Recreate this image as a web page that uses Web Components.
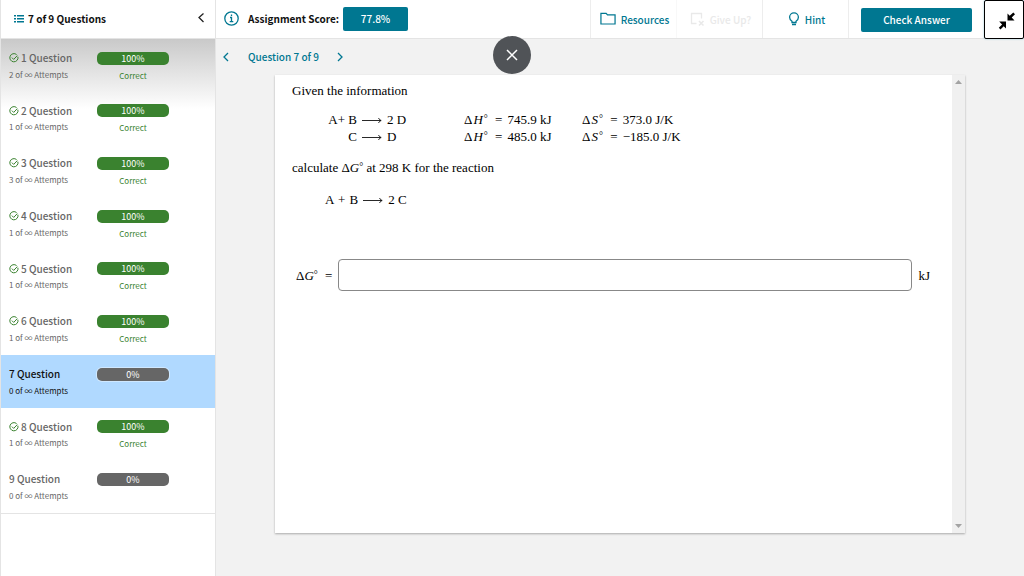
<!DOCTYPE html>
<html lang="en">
<head>
<meta charset="utf-8">
<meta name="viewport" content="width=device-width, initial-scale=1">
<title>Assignment</title>
<style>
  html, body {
    height: 100%;
    margin: 0;
  }
  body {
    --teal: #007791;
    --green: #3a822f;
    --line: #e4e4e4;
    font-family: "Noto Sans CJK SC", "Noto Sans", sans-serif;
    font-size: 10px;
    line-height: 16px;
    color: #111;
    background: #f2f2f2;
  }
</style>
</head>
<body>
<assignment-app>
  <question-list slot="sidebar" heading="7 of 9 Questions">
    <question-item number="1" attempts="2" score="100"></question-item>
    <question-item number="2" attempts="1" score="100"></question-item>
    <question-item number="3" attempts="3" score="100"></question-item>
    <question-item number="4" attempts="1" score="100"></question-item>
    <question-item number="5" attempts="1" score="100"></question-item>
    <question-item number="6" attempts="1" score="100"></question-item>
    <question-item number="7" attempts="0" score="0" current></question-item>
    <question-item number="8" attempts="1" score="100"></question-item>
    <question-item number="9" attempts="0" score="0"></question-item>
  </question-list>
  <score-bar slot="toolbar" score="77.8%"></score-bar>
  <question-pager slot="pager">Question 7 of 9</question-pager>
  <question-card slot="content"></question-card>
</assignment-app>

<script>
  class BaseElement extends HTMLElement {
    constructor() {
      super();
      this.attachShadow({ mode: "open" });
    }

    connectedCallback() {
      this.shadowRoot.innerHTML = this.template();
    }
  }

  class AssignmentApp extends BaseElement {
    template() {
      return `
        <style>
          :host {
            display: grid;
            grid-template-columns: 216px minmax(0, 1fr);
            min-height: 100vh;
            position: relative;
          }
          main {
            display: flex;
            flex-direction: column;
            min-width: 0;
          }
          .close {
            position: absolute;
            top: 36px;
            left: calc(50% - 19px);
            width: 38px;
            height: 38px;
            padding: 0;
            border: 0;
            border-radius: 50%;
            background: #505357;
            display: grid;
            place-items: center;
          }
        </style>
        <slot name="sidebar"></slot>
        <main>
          <slot name="toolbar"></slot>
          <slot name="pager"></slot>
          <slot name="content"></slot>
        </main>
        <button class="close" type="button" aria-label="Close">
          <svg width="12" height="12" viewBox="0 0 12 12" fill="none" stroke="#fff" stroke-width="1.5"><path d="M1 1l10 10M11 1L1 11"/></svg>
        </button>
      `;
    }
  }

  class QuestionList extends BaseElement {
    template() {
      return `
        <style>
          :host {
            display: flex;
            flex-direction: column;
            box-sizing: border-box;
            background: #fff;
            border-left: 1px solid var(--line);
            border-right: 1px solid var(--line);
          }
          header {
            display: flex;
            align-items: center;
            gap: 4px;
            height: 38px;
            padding: 0 10px 0 13px;
            border-bottom: 1px solid var(--line);
          }
          h1 {
            flex: 1;
            margin: 0;
            font-size: 10px;
            font-weight: 700;
          }
          button {
            padding: 0;
            border: 0;
            background: none;
            display: flex;
          }
          nav {
            display: grid;
            grid-auto-rows: 1fr;
            min-height: 474px;
            border-bottom: 1px solid var(--line);
            background: linear-gradient(#c9c9c9, #fff 70px);
          }
        </style>
        <header>
          <svg width="10" height="10" viewBox="0 0 10 10" fill="#007791"><path d="M0 1h2v1.500H0zM3 1h7v1.500H3zM0 4h2v1.500H0zM3 4h7v1.500H3zM0 7h2v1.500H0zM3 7h7v1.500H3z"/></svg>
          <h1>${this.getAttribute("heading")}</h1>
          <button type="button" aria-label="Collapse">
            <svg width="8" height="12" viewBox="0 0 8 12" fill="none" stroke="#222" stroke-width="1.3"><path d="M6.500 0.500L2 4.500l4.500 4.500"/></svg>
          </button>
        </header>
        <nav><slot></slot></nav>
      `;
    }
  }

  class QuestionItem extends BaseElement {
    template() {
      const correct = this.getAttribute("score") === "100";
      return `
        <style>
          :host {
            display: block;
            color: #666;
          }
          :host([current]) {
            background: #b0d9ff;
            color: #111;
          }
          a {
            display: grid;
            grid-template-columns: 88px 72px;
            grid-template-rows: 16px 17px;
            align-items: center;
            padding: 11px 0 0 8px;
            color: inherit;
            text-decoration: none;
          }
          .name {
            display: flex;
            align-items: center;
            gap: 2px;
            font-weight: 500;
          }
          .attempts,
          .state {
            font-size: 8px;
          }
          .pill {
            height: 13px;
            border-radius: 5px;
            background: #666;
            color: #fff;
            font-size: 9px;
            line-height: 14px;
            text-align: center;
          }
          .pill.correct {
            background: var(--green);
          }
          .pill:not(.correct) {
            box-shadow: 0 0 0 1px rgba(255, 255, 255, 0.4);
          }
          .state {
            padding-top: 2px;
            text-align: center;
            color: var(--green);
          }
        </style>
        <a href="#question-${this.getAttribute("number")}">
          <span class="name">
            ${correct ? `<svg width="10" height="10" viewBox="0 0 10 10" fill="none" stroke="#3a822f"><path d="M8.900 3.700A4.100 4.100 0 1 1 7.600 1.600"/><path d="M2.900 4.600l1.800 1.800 3.600-3.800"/></svg>` : ""}
            <span>${this.getAttribute("number")} Question</span>
          </span>
          <span class="pill ${correct ? "correct" : ""}">${this.getAttribute("score")}%</span>
          <span class="attempts">${this.getAttribute("attempts")} of ∞ Attempts</span>
          ${correct ? `<span class="state">Correct</span>` : ""}
        </a>
      `;
    }
  }

  class ScoreBar extends BaseElement {
    template() {
      return `
        <style>
          :host {
            display: flex;
            align-items: center;
            height: 38px;
            background: #fff;
            border-bottom: 1px solid var(--line);
          }
          button {
            font: inherit;
            font-weight: 500;
            color: var(--teal);
            background: none;
            border: 0;
            padding: 0;
          }
          svg {
            display: block;
          }
          .info {
            margin: 0 9px 2px 8px;
          }
          .label {
            font-weight: 700;
          }
          .score,
          .check {
            height: 24px;
            border-radius: 2px;
            background: var(--teal);
            color: #fff;
            line-height: 24px;
            text-align: center;
          }
          .score {
            width: 65px;
            margin-left: 4px;
            font-weight: 500;
          }
          .tools {
            display: flex;
            align-self: stretch;
            margin-left: auto;
          }
          .tool {
            display: flex;
            align-items: center;
            justify-content: center;
            gap: 5px;
            width: 86px;
            box-sizing: border-box;
            padding-left: 2px;
            border-left: 1px solid #ededed;
          }
          .tool span {
            padding-top: 2px;
          }
          .tool:disabled {
            color: #e9e9e9;
            border-color: #f8f8f8;
          }
          .submit {
            display: flex;
            align-items: center;
            padding: 2px 12px 0;
            border-left: 1px solid #ededed;
          }
          .check {
            width: 111px;
          }
          .shrink {
            display: grid;
            place-items: center;
            width: 40px;
            height: 39px;
            padding-top: 3px;
            padding-left: 5px;
            border: 1px solid #000;
            border-radius: 2px;
            box-shadow: 0 0 2px #8cc4d4;
            background: #fff;
          }
        </style>
        <button class="info" type="button" aria-label="Score information">
          <svg width="15" height="15" viewBox="0 0 15 15" fill="none" stroke="#007791" stroke-width="1.300"><circle cx="7.500" cy="7.500" r="6.700"/><path d="M6 6.500h1.500v4M5.700 10.700h3.600M7.500 3.500v1.500"/></svg>
        </button>
        <span class="label">Assignment Score:</span>
        <span class="score">${this.getAttribute("score")}</span>
        <div class="tools">
          <button class="tool" type="button">
            <svg width="16" height="14" viewBox="0 0 17 14" fill="none" stroke="#007791" stroke-width="1.300"><path d="M1 12.300V1h5.500l1.500 1.700h8v9.600z"/></svg>
            <span>Resources</span>
          </button>
          <button class="tool" type="button" disabled>
            <svg width="15" height="15" viewBox="0 0 15 15" fill="none" stroke="#e9e9e9" stroke-width="1.300"><path d="M6.500 11.500H1.500V1.500h10v5"/><path d="M9 9l4.500 4.500M13.500 9L9 13.500" stroke-width="1.600"/></svg>
            <span>Give Up?</span>
          </button>
          <button class="tool" type="button">
            <svg width="12" height="15" viewBox="0 0 12 15" fill="none" stroke="#007791" stroke-width="1.300"><path d="M4 10.500V9.300C2.500 8.300 1.600 7 1.600 5.300a4.400 4.400 0 0 1 8.800 0C10.400 7 9.500 8.300 8 9.300v1.200zM4 12.500h4"/></svg>
            <span>Hint</span>
          </button>
          <div class="submit"><button class="check" type="button">Check Answer</button></div>
          <button class="shrink" type="button" aria-label="Exit full screen">
            <svg width="18" height="18" viewBox="0 0 18 18" fill="#000"><path d="M9.500 8.500V1.500l2.200 2.200L15.300.5l1.700 1.700-3.300 3.400 2.800 2.900zM8 9.500v7l-2.300-2.300-3.200 3.300L.8 15.800l3.300-3.300L1.200 9.500z"/></svg>
          </button>
        </div>
      `;
    }
  }

  class QuestionPager extends BaseElement {
    template() {
      return `
        <style>
          :host {
            display: flex;
            align-items: center;
            gap: 18px;
            height: 36px;
            padding-left: 6px;
            font-weight: 500;
            color: var(--teal);
          }
          button {
            display: flex;
            padding: 0;
            border: 0;
            background: none;
          }
        </style>
        <button type="button" aria-label="Previous question">
          <svg width="8" height="10" viewBox="0 0 8 10" fill="none" stroke="#007791" stroke-width="1.300"><path d="M6 1L2 5l4 4"/></svg>
        </button>
        <slot></slot>
        <button type="button" aria-label="Next question">
          <svg width="8" height="10" viewBox="0 0 8 10" fill="none" stroke="#007791" stroke-width="1.300"><path d="M1 1l4 4-4 4"/></svg>
        </button>
      `;
    }
  }

  // Long reaction arrow
  class ReactionArrow extends BaseElement {
    template() {
      return `
        <style>
          :host {
            display: inline-block;
            margin: 0 5px;
          }
          svg {
            display: block;
          }
        </style>
        <svg width="20" height="8" viewBox="0 0 20 8" fill="none" stroke="#111" stroke-width="0.900"><path d="M0 4.500h19M16.500 2q.8 2 2.700 2.500-1.900.5-2.700 2.500"/></svg>
      `;
    }
  }

  // Standard-state symbol such as ΔH°
  class StateSymbol extends BaseElement {
    template() {
      return `
        <style>
          .degree {
            font-size: 10px;
            line-height: 1;
            vertical-align: 2px;
          }
          :host([spaced]) i {
            margin: 0 1px;
          }
        </style>
        <span>Δ<i>${this.getAttribute("letter")}</i><span class="degree">°</span></span>
      `;
    }
  }

  class QuestionCard extends BaseElement {
    template() {
      return `
        <style>
          :host {
            flex: 1;
            display: flex;
            margin: 0 59px 43px;
            background: #fff;
            box-shadow: 0 1px 2px rgba(0, 0, 0, 0.3);
            font-family: "Liberation Serif", serif;
            font-size: 13px;
            line-height: 17px;
            color: #000;
          }
          article {
            flex: 1;
            min-width: 0;
            padding: 7px 17px;
          }
          p {
            margin: 0;
          }
          .data {
            display: grid;
            grid-template-columns: 48px 30px 77px 118px auto;
            align-items: center;
            margin: 12px 0 14px 17px;
          }
          .lhs {
            text-align: right;
          }
          .sign {
            margin: 0 2px 0 4px;
          }
          .target {
            margin: 15px 0 0 33px;
          }
          .target .sign {
            margin: 0 1px;
          }
          .answer {
            display: flex;
            align-items: center;
            gap: 6px;
            margin-top: 51px;
            padding: 0 5px 0 4px;
          }
          .answer .sign {
            margin: 0 0 0 4px;
          }
          input {
            flex: 1;
            min-width: 0;
            height: 32px;
            box-sizing: border-box;
            border: 1px solid #888;
            border-radius: 4px;
            padding: 0 8px;
            font: inherit;
          }
          .scroll {
            display: flex;
            flex-direction: column;
            justify-content: space-between;
            align-items: center;
            width: 13px;
            padding: 5px 0;
            box-sizing: border-box;
            background: #f0f0f0;
          }
        </style>
        <article>
          <p>Given the information</p>
          <div class="data">
            <span class="lhs">A+ B</span><reaction-arrow></reaction-arrow><span>2 D</span>
            <span><state-symbol letter="H" spaced></state-symbol> <span class="sign">=</span> 745.9 kJ</span>
            <span><state-symbol letter="S" spaced></state-symbol> <span class="sign">=</span> 373.0 J/K</span>
            <span class="lhs">C</span><reaction-arrow></reaction-arrow><span>D</span>
            <span><state-symbol letter="H" spaced></state-symbol> <span class="sign">=</span> 485.0 kJ</span>
            <span><state-symbol letter="S" spaced></state-symbol> <span class="sign">=</span> −185.0 J/K</span>
          </div>
          <p>calculate <state-symbol letter="G"></state-symbol> at 298 K for the reaction</p>
          <p class="target">A <span class="sign">+</span> B<reaction-arrow></reaction-arrow>2 C</p>
          <div class="answer">
            <label for="answer"><state-symbol letter="G"></state-symbol> <span class="sign">=</span></label>
            <input type="text" id="answer">
            <span>kJ</span>
          </div>
        </article>
        <div class="scroll">
          <svg width="7" height="4" viewBox="0 0 7 4" fill="#a3a3a3"><path d="M0 4l3.500-4L7 4z"/></svg>
          <svg width="7" height="4" viewBox="0 0 7 4" fill="#a3a3a3"><path d="M0 0l3.500 4L7 0z"/></svg>
        </div>
      `;
    }
  }

  customElements.define("assignment-app", AssignmentApp);
  customElements.define("question-list", QuestionList);
  customElements.define("question-item", QuestionItem);
  customElements.define("score-bar", ScoreBar);
  customElements.define("question-pager", QuestionPager);
  customElements.define("reaction-arrow", ReactionArrow);
  customElements.define("state-symbol", StateSymbol);
  customElements.define("question-card", QuestionCard);
</script>
</body>
</html>
